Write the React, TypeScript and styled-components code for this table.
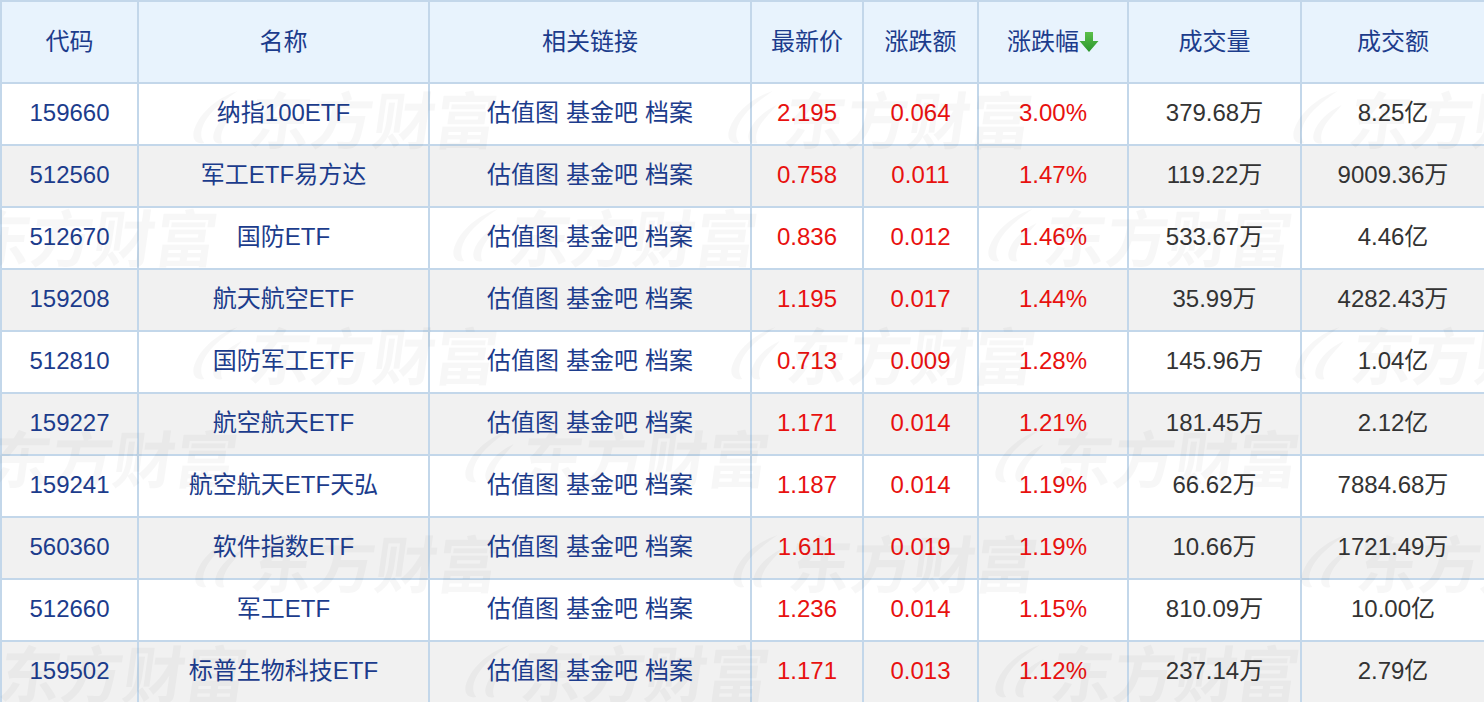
import React from "react";
import styled, { createGlobalStyle } from "styled-components";

const GlobalStyle = createGlobalStyle`
  html, body { margin: 0; padding: 0; background: #ffffff; }
  body { font-family: "Liberation Sans", "Noto Sans CJK SC", sans-serif; }
`;

const Wrap = styled.div`
  position: relative;
  width: 1484px;
  height: 702px;
  overflow: hidden;
`;

const Table = styled.table`
  width: 1484px;
  border-collapse: collapse;
  table-layout: fixed;
  font-family: "Liberation Sans", "Noto Sans CJK SC", sans-serif;
  font-size: 24px;
  line-height: 1;
`;

const HeadRow = styled.tr`
  height: 82px;
  background: #e8f3fd;
`;

const HeadCell = styled.th`
  border: 2px solid #c3d7ea;
  color: #1c3c8c;
  font-weight: normal;
  text-align: center;
  vertical-align: middle;
  padding: 0;
  white-space: nowrap;
`;

const Row = styled.tr<{ $alt: boolean }>`
  height: 62px;
  background: ${(p) => (p.$alt ? "#f1f1f1" : "#ffffff")};
`;

type Tone = "link" | "up" | "plain";

const Cell = styled.td<{ $tone: Tone }>`
  border: 2px solid #c3d7ea;
  text-align: center;
  vertical-align: middle;
  padding: 0 0 3px 0;
  white-space: nowrap;
  color: ${(p) =>
    p.$tone === "link" ? "#1c3c8c" : p.$tone === "up" ? "#e8110f" : "#333333"};
`;

const LinkGroup = styled.span`
  display: inline-flex;
  gap: 7px;
  color: #1c3c8c;
`;

const SortArrow = styled.svg`
  width: 20px;
  height: 22px;
  vertical-align: -3px;
`;

const MarkLayer = styled.div`
  position: absolute;
  inset: 0;
  pointer-events: none;
  overflow: hidden;
`;

const Mark = styled.div`
  position: absolute;
  display: flex;
  align-items: center;
  gap: 4px;
  color: rgba(0, 0, 0, 0.032);
  font-family: "Noto Sans CJK SC", sans-serif;
  font-weight: 700;
  font-size: 62px;
  line-height: 1;
  transform: skewX(-8deg);
  white-space: nowrap;
`;

const MarkLogo = styled.svg`
  width: 56px;
  height: 60px;
  fill: rgba(0, 0, 0, 0.032);
`;

const cols = [137, 291, 322, 112, 115, 150, 173, 184];

const rows = [
  ["159660", "纳指100ETF", "2.195", "0.064", "3.00%", "379.68万", "8.25亿"],
  ["512560", "军工ETF易方达", "0.758", "0.011", "1.47%", "119.22万", "9009.36万"],
  ["512670", "国防ETF", "0.836", "0.012", "1.46%", "533.67万", "4.46亿"],
  ["159208", "航天航空ETF", "1.195", "0.017", "1.44%", "35.99万", "4282.43万"],
  ["512810", "国防军工ETF", "0.713", "0.009", "1.28%", "145.96万", "1.04亿"],
  ["159227", "航空航天ETF", "1.171", "0.014", "1.21%", "181.45万", "2.12亿"],
  ["159241", "航空航天ETF天弘", "1.187", "0.014", "1.19%", "66.62万", "7884.68万"],
  ["560360", "软件指数ETF", "1.611", "0.019", "1.19%", "10.66万", "1721.49万"],
  ["512660", "军工ETF", "1.236", "0.014", "1.15%", "810.09万", "10.00亿"],
  ["159502", "标普生物科技ETF", "1.171", "0.013", "1.12%", "237.14万", "2.79亿"],
];

const marks: [number, number][] = [
  [190, 86], [725, 86], [1290, 86],
  [-90, 204], [450, 204], [985, 204],
  [190, 322], [728, 322], [1292, 322],
  [-70, 425], [462, 425], [992, 425],
  [192, 530], [730, 530], [1298, 530],
  [-60, 640], [462, 640], [992, 640],
];

function Logo() {
  return (
    <MarkLogo viewBox="0 0 56 60">
      <path d="M44 4 C26 10 10 24 6 42 C4 52 10 58 18 56 C12 50 12 40 18 30 C24 20 34 12 44 4 Z" />
      <path d="M50 18 C38 24 28 34 26 46 C25 54 30 58 36 56 C32 50 34 40 40 32 C44 26 48 22 50 18 Z" />
    </MarkLogo>
  );
}

function Arrow() {
  return (
    <SortArrow viewBox="0 0 20 22">
      <defs>
        <linearGradient id="ga" x1="0" y1="0" x2="0" y2="1">
          <stop offset="0" stopColor="#5cbf4a" />
          <stop offset="1" stopColor="#2a962c" />
        </linearGradient>
      </defs>
      <path d="M6 1 H14 V10 H19.5 L10 21 L0.5 10 H6 Z" fill="url(#ga)" />
    </SortArrow>
  );
}

export default function App() {
  return (
    <Wrap>
      <GlobalStyle />
      <Table>
        <colgroup>
          {cols.map((w, i) => (
            <col key={i} style={{ width: w }} />
          ))}
        </colgroup>
        <thead>
          <HeadRow>
            <HeadCell>代码</HeadCell>
            <HeadCell>名称</HeadCell>
            <HeadCell>相关链接</HeadCell>
            <HeadCell>最新价</HeadCell>
            <HeadCell>涨跌额</HeadCell>
            <HeadCell>
              涨跌幅
              <Arrow />
            </HeadCell>
            <HeadCell>成交量</HeadCell>
            <HeadCell>成交额</HeadCell>
          </HeadRow>
        </thead>
        <tbody>
          {rows.map((r, i) => (
            <Row key={r[0] + i} $alt={i % 2 === 1}>
              <Cell $tone="link">{r[0]}</Cell>
              <Cell $tone="link">{r[1]}</Cell>
              <Cell $tone="link">
                <LinkGroup>
                  <span>估值图</span>
                  <span>基金吧</span>
                  <span>档案</span>
                </LinkGroup>
              </Cell>
              <Cell $tone="up">{r[2]}</Cell>
              <Cell $tone="up">{r[3]}</Cell>
              <Cell $tone="up">{r[4]}</Cell>
              <Cell $tone="plain">{r[5]}</Cell>
              <Cell $tone="plain">{r[6]}</Cell>
            </Row>
          ))}
        </tbody>
      </Table>
      <MarkLayer>
        {marks.map(([x, y], i) => (
          <Mark key={i} style={{ left: x, top: y }}>
            <Logo />
            <span>东方财富</span>
          </Mark>
        ))}
      </MarkLayer>
    </Wrap>
  );
}
